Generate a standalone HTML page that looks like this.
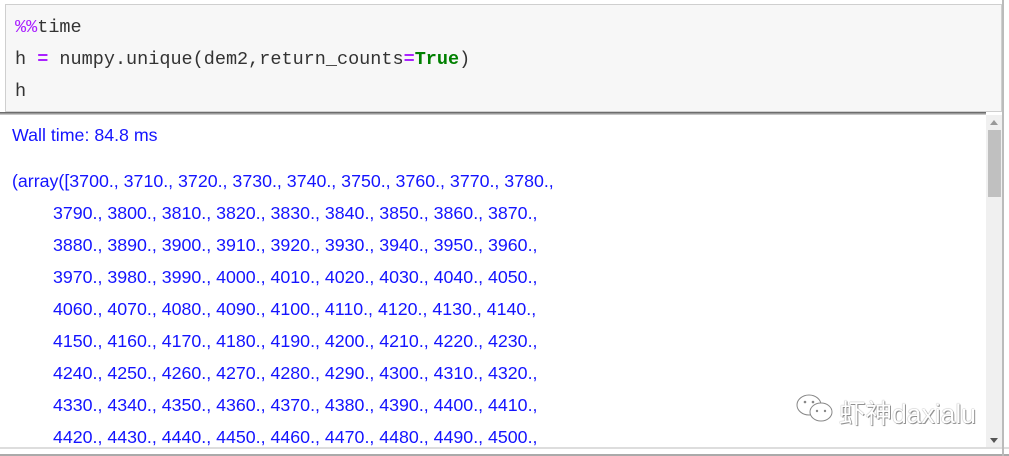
<!DOCTYPE html>
<html><head><meta charset="utf-8"><style>
body{margin:0;width:1009px;height:456px;background:#fff;position:relative;overflow:hidden}
.cell{position:absolute;left:5px;top:4px;width:997px;height:108px;background:#f7f7f7;border:1px solid #cfcfcf;box-sizing:border-box}
.code{position:absolute;left:9px;font-family:"Liberation Mono",monospace;font-size:18.5px;color:#333;white-space:pre}
.shadow{position:absolute;left:0;top:112px;width:986px;height:3px;background:linear-gradient(#555,#ddd)}
.out{position:absolute;left:0;top:115px;width:986px;height:332px;font-family:"Liberation Sans",sans-serif;font-size:17.8px;color:#1414ff;white-space:pre}
.out div{position:absolute}
.sb{position:absolute;left:986px;top:115px;width:16px;height:333px;background:#f0f0f0}
.th{position:absolute;left:988px;top:130px;width:13px;height:67px;background:#c0c0c0}
.bot{position:absolute;left:0;top:447px;width:1009px;height:2px;background:#ddd}
.bot2{position:absolute;left:0;top:454px;width:1009px;height:2px;background:#aaa}
.rb{position:absolute;left:1002px;top:0;width:2px;height:456px;background:#bbb}
.wm{position:absolute;left:839px;top:392px;font-family:"Liberation Sans","Noto Sans CJK SC",sans-serif;font-size:26.5px;color:#fff;text-shadow:0 0 1px #666,1px 1px 0 #999}
</style></head><body>
<div class="cell">
<div class="code" style="top:12px"><span style="color:#aa22ff">%%</span>time</div>
<div class="code" style="top:44px">h <b style="color:#aa22ff">=</b> numpy.unique(dem2,return_counts<b style="color:#aa22ff">=</b><b style="color:#008000">True</b>)</div>
<div class="code" style="top:76px">h</div>
</div>
<div class="shadow"></div>
<div class="out">
<div style="left:12px;top:10px">Wall time: 84.8 ms</div>
<div style="left:12px;top:56px">(array([3700., 3710., 3720., 3730., 3740., 3750., 3760., 3770., 3780.,</div>
<div style="left:53px;top:88px">3790., 3800., 3810., 3820., 3830., 3840., 3850., 3860., 3870.,</div>
<div style="left:53px;top:120px">3880., 3890., 3900., 3910., 3920., 3930., 3940., 3950., 3960.,</div>
<div style="left:53px;top:152px">3970., 3980., 3990., 4000., 4010., 4020., 4030., 4040., 4050.,</div>
<div style="left:53px;top:184px">4060., 4070., 4080., 4090., 4100., 4110., 4120., 4130., 4140.,</div>
<div style="left:53px;top:216px">4150., 4160., 4170., 4180., 4190., 4200., 4210., 4220., 4230.,</div>
<div style="left:53px;top:248px">4240., 4250., 4260., 4270., 4280., 4290., 4300., 4310., 4320.,</div>
<div style="left:53px;top:280px">4330., 4340., 4350., 4360., 4370., 4380., 4390., 4400., 4410.,</div>
<div style="left:53px;top:312px">4420., 4430., 4440., 4450., 4460., 4470., 4480., 4490., 4500.,</div>
</div>
<div class="sb"></div><div class="th"></div>
<div style="position:absolute;left:990px;top:120px;width:0;height:0;border:4px solid transparent;border-bottom:5px solid #999;border-top:0"></div>
<div style="position:absolute;left:990px;top:438px;width:0;height:0;border:4px solid transparent;border-top:5px solid #555;border-bottom:0"></div>
<div class="bot"></div><div class="bot2"></div><div class="rb"></div>
<svg style="position:absolute;left:795px;top:393px" width="42" height="30"><g fill="#fff" stroke="#888" stroke-width="1"><ellipse cx="14" cy="12" rx="12" ry="10"/><ellipse cx="26" cy="19" rx="11" ry="9"/></g><g fill="#888"><circle cx="10" cy="9" r="1.3"/><circle cx="18" cy="9" r="1.3"/><circle cx="22" cy="18" r="1.2"/><circle cx="30" cy="18" r="1.2"/></g></svg>
<div class="wm">虾神daxialu</div>
</body></html>
